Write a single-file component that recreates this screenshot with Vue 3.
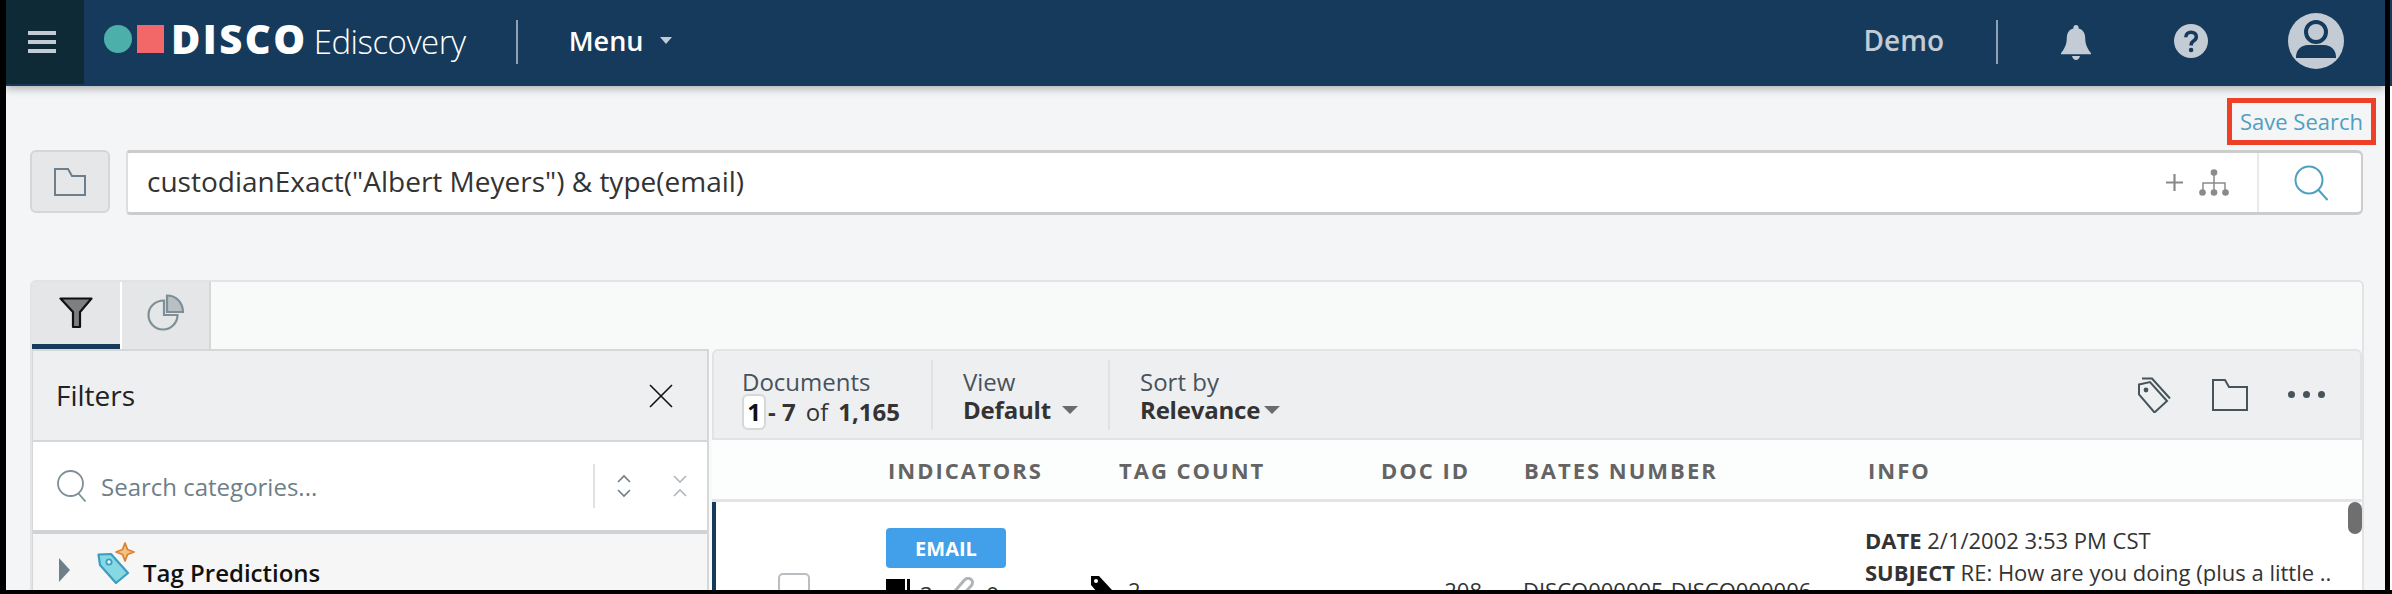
<script setup>
const columns = [
  { label: 'INDICATORS', cls: 'c-ind' },
  { label: 'TAG COUNT', cls: 'c-tag' },
  { label: 'DOC ID', cls: 'c-doc' },
  { label: 'BATES NUMBER', cls: 'c-bates' },
  { label: 'INFO', cls: 'c-info' }
]
</script>

<template>
  <div class="shot">
    <div class="page">
      <header class="topbar">
        <button class="burger" aria-label="Menu">
          <span></span><span></span><span></span>
        </button>
        <div class="logo">
          <i class="dot"></i><i class="sq"></i>
          <b class="disco">DISCO</b>
          <span class="edisc">Ediscovery</span>
        </div>
        <div class="vr vr-left"></div>
        <div class="menu">Menu</div>
        <i class="caret-light"></i>
        <div class="spacer"></div>
        <div class="demo">Demo</div>
        <div class="vr vr-right"></div>
        <svg class="bell" viewBox="0 0 30 35"><path fill="#c3cbd5" d="M15 0c1.6 0 2.6 1 2.6 2.6v.9c4.6 1.2 6.6 5 6.6 9.6 0 5.800 1.700 10 5.800 15.100v1H0v-1c4.100-5.100 5.800-9.300 5.800-15.100 0-4.600 2-8.400 6.600-9.600v-.9C12.400 1 13.400 0 15 0zM11 31h8c-.4 2.300-2 4-4 4s-3.600-1.700-4-4z"/></svg>
        <svg class="help" viewBox="0 0 34 34"><circle cx="17" cy="17" r="17" fill="#c3cbd5"/><path fill="none" stroke="#153a5b" stroke-width="3.600" d="M11.800 13.200c0-3 2.300-5 5.300-5s5.200 1.800 5.200 4.500c0 2.200-1.200 3.300-2.800 4.300-1.500 1-2.300 1.800-2.300 3.600v.8"/><circle cx="17.100" cy="26" r="2.300" fill="#153a5b"/></svg>
        <svg class="avatar" viewBox="0 0 56 56"><circle cx="28" cy="28" r="28" fill="#c3cbd5"/><circle cx="28" cy="19" r="10" fill="none" stroke="#153a5b" stroke-width="4"/><path fill="#153a5b" d="M8 44c0-7 5-12 12-12h16c7 0 12 5 12 12v1H8z"/></svg>
      </header>

      <main class="content">
        <div class="save-row"><a class="save">Save Search</a></div>

        <div class="search-row">
          <button class="folder-btn" aria-label="Folders">
            <svg width="32" height="28" viewBox="0 0 32 28"><path d="M1 1h13l4 7h13v19H1z" fill="none" stroke="#6d7f8b" stroke-width="2"/></svg>
          </button>
          <div class="query">
            <span class="query-text">custodianExact("Albert Meyers") &amp; type(email)</span>
            <div class="query-tools">
              <svg width="17" height="17" viewBox="0 0 17 17"><path d="M8.500 0v17M0 8.500h17" stroke="#8a8a8a" stroke-width="2.200"/></svg>
              <svg class="tree" width="30" height="27" viewBox="0 0 30 27"><path d="M15 3v20M4 23v-9h22v9" fill="none" stroke="#8a8a8a" stroke-width="1.500"/><circle cx="15" cy="3.500" r="3.300" fill="#8a8a8a"/><circle cx="3.500" cy="23.500" r="3.300" fill="#8a8a8a"/><circle cx="15" cy="23.500" r="3.300" fill="#8a8a8a"/><circle cx="26.500" cy="23.500" r="3.300" fill="#8a8a8a"/></svg>
            </div>
            <div class="query-go">
              <svg width="34" height="36" viewBox="0 0 34 36"><circle cx="15" cy="15" r="13.500" fill="none" stroke="#4f9fc0" stroke-width="2"/><path d="M24.500 25l9 10" stroke="#4f9fc0" stroke-width="2"/></svg>
            </div>
          </div>
        </div>

        <section class="panel">
          <div class="tabs">
            <div class="tab active">
              <svg width="34" height="32" viewBox="0 0 34 32"><path d="M1.500 1.500h31L21 15v15h-7V15z" fill="#7d7f81" stroke="#111" stroke-width="2.200" stroke-linejoin="round"/></svg>
            </div>
            <div class="tab">
              <svg width="38" height="37" viewBox="0 0 38 37"><path d="M17 6.500C8 6.500 1.500 13 1.500 21S8 35.500 16 35.500 30.500 29 30.500 21H17z" fill="none" stroke="#7e8f98" stroke-width="2.200"/><path d="M20 1.500c9 0 16 7 16 16.500H20z" fill="#b9bfc3" stroke="#7e8f98" stroke-width="2.200"/></svg>
            </div>
          </div>

          <div class="split">
            <aside class="filters">
              <div class="filters-head">
                <span class="filters-title">Filters</span>
                <svg width="24" height="24" viewBox="0 0 24 24"><path d="M1 1l22 22M23 1L1 23" stroke="#111" stroke-width="1.600"/></svg>
              </div>
              <div class="filters-search">
                <svg class="f-mag" width="30" height="32" viewBox="0 0 30 32"><circle cx="13.500" cy="13.500" r="12.500" fill="none" stroke="#7e8f98" stroke-width="1.800"/><path d="M21.500 23.500l7 8" stroke="#7e8f98" stroke-width="1.800"/></svg>
                <span class="f-placeholder">Search categories...</span>
                <div class="f-vr"></div>
                <svg class="f-expand" width="14" height="24" viewBox="0 0 14 24"><path d="M1 8l6-6 6 6M1 16l6 6 6-6" fill="none" stroke="#6f7f88" stroke-width="1.600"/></svg>
                <svg class="f-collapse" width="14" height="24" viewBox="0 0 14 24"><path d="M1 2l6 6 6-6M1 22l6-6 6 6" fill="none" stroke="#b0b8bd" stroke-width="1.600"/></svg>
              </div>
              <div class="filters-row">
                <i class="tri"></i>
                <svg class="tagpred" width="38" height="42" viewBox="0 0 38 42"><path d="M1.500 12.500l12.500-.5L31 31 19 41 3 23z" fill="#86d8e4" stroke="#3b9dbf" stroke-width="2.200" stroke-linejoin="round"/><circle cx="12" cy="20" r="2.600" fill="#fff" stroke="#3b9dbf" stroke-width="1.800"/><path d="M28 1l2.500 6.500L37 10l-6.500 2.500L28 19l-2.500-6.500L19 10l6.500-2.500z" fill="#f2c27d" stroke="#dc8335" stroke-width="1.800" stroke-linejoin="round"/></svg>
                <span class="f-label">Tag Predictions</span>
              </div>
            </aside>

            <div class="docs">
              <div class="toolbar">
                <div class="tb-group g-docs">
                  <div class="tb-label">Documents</div>
                  <div class="tb-pages"><span class="page-input">1</span><b class="dash">- 7</b><span class="of">of</span><b>1,165</b></div>
                </div>
                <div class="tb-group g-view">
                  <div class="tb-label">View</div>
                  <div class="tb-value"><b>Default</b><i class="caret gap-a"></i></div>
                </div>
                <div class="tb-group g-sort">
                  <div class="tb-label">Sort by</div>
                  <div class="tb-value"><b>Relevance</b><i class="caret gap-b"></i></div>
                </div>
                <div class="spacer"></div>
                <svg class="t-tags" width="34" height="36" viewBox="0 0 34 36"><path d="M2 7.500L13 5l17 19-12.500 11.500L2 17.500z" fill="none" stroke="#46545c" stroke-width="2"/><path d="M5 1.500h10l18 20" fill="none" stroke="#46545c" stroke-width="2"/><circle cx="9" cy="13" r="2.400" fill="#46545c"/></svg>
                <svg class="t-folder" width="36" height="32" viewBox="0 0 36 32"><path d="M1 1h12l4 7h18v23H1z" fill="none" stroke="#46545c" stroke-width="2"/></svg>
                <div class="t-dots"><i></i><i></i><i></i></div>
              </div>

              <div class="thead">
                <span v-for="c in columns" :key="c.label" :class="c.cls">{{ c.label }}</span>
              </div>

              <div class="row">
                <div class="check-col"><span class="check"></span></div>
                <div class="ind-col">
                  <span class="badge">EMAIL</span>
                  <div class="ind-line">
                    <i class="block"></i><i class="bar"></i><span class="n1">3</span>
                    <svg class="clip" width="22" height="26" viewBox="0 0 22 26"><path d="M5 24L19 9c2.500-3 1.500-6-.5-7S14 1 12 3.500L3 14c-2.500 3-1.500 6 .5 7.500" fill="none" stroke="#aeb5b9" stroke-width="3"/></svg>
                    <span class="n2">9</span>
                  </div>
                </div>
                <div class="tag-col">
                  <svg width="22" height="24" viewBox="0 0 22 24"><path d="M1 1h8l13 14-9 9L1 10z" fill="#000"/><circle cx="6" cy="6" r="2" fill="#fff"/></svg>
                  <span>2</span>
                </div>
                <div class="id-col">208</div>
                <div class="bates-col">DISCO000005-DISCO000006</div>
                <div class="info-col">
                  <div><b>DATE</b> 2/1/2002 3:53 PM CST</div>
                  <div><b>SUBJECT</b> RE: How are you doing (plus a little ..</div>
                </div>
                <i class="thumb"></i>
              </div>
            </div>
          </div>
        </section>
      </main>
    </div>
  </div>
</template>

<style>
html, body { margin: 0; padding: 0; background: #fff; overflow: hidden; }
</style>

<style scoped>
* { box-sizing: border-box; }
.shot {
  width: 2392px; height: 594px; overflow: hidden; padding-right: 2px;
  border-bottom: 4px solid #000;
  background: linear-gradient(#153a5b 86px, #fff 86px);
  font-family: "Open Sans", "Liberation Sans", sans-serif;
  color: #333;
}
.page {
  height: 590px; display: flex; flex-direction: column; overflow: hidden; background: #f4f5f7;
  border-left: 6px solid #000; border-right: 5px solid #000;
}
.spacer { flex: 1; }
i { display: block; }

.topbar {
  height: 86px; flex: none; display: flex; align-items: center; background: #153a5b;
  box-shadow: 0 3px 8px rgba(0,0,0,.28); position: relative; z-index: 1;
}
.burger {
  width: 78px; height: 84px; align-self: flex-start; background: #0f2a37; border: 0; padding: 0 0 0 22px;
  display: flex; flex-direction: column; justify-content: center; gap: 5px;
}
.burger span { display: block; width: 28px; height: 4px; background: #c3cbd5; }
.logo { display: flex; align-items: center; margin-left: 20px; height: 28px; margin-top: -8px; }
.dot { width: 28px; height: 28px; border-radius: 50%; background: #4dafa9; }
.sq { width: 27px; height: 28px; background: #f26767; margin-left: 5px; }
.disco { color: #fff; font-size: 40px; font-weight: 800; margin-left: 7px; letter-spacing: 2.500px; line-height: 28px; }
.edisc { color: #fff; font-size: 33px; font-weight: 300; margin-left: 6px; letter-spacing: -.5px; line-height: 28px; margin-top: 6px; }
.vr { width: 2px; height: 44px; background: #8fa1b3; }
.vr-left { margin-left: 50px; margin-top: -2px; }
.menu { color: #fff; font-size: 27px; font-weight: 600; margin-left: 51px; margin-top: -6px; }
.caret-light { border: 6px solid transparent; border-top: 7px solid #c3cbd5; border-bottom: 0; margin-left: 17px; margin-top: -5px; }
.demo { color: #c3cbd5; font-size: 28px; font-weight: 600; margin-top: -6px; }
.vr-right { margin-left: 52px; margin-top: -2px; }
.bell { width: 30px; height: 35px; margin-left: 63px; margin-top: -1px; }
.help { width: 34px; height: 34px; margin-left: 83px; margin-top: -4px; }
.avatar { width: 56px; height: 56px; margin-left: 80px; margin-right: 41px; margin-top: -4px; }

.content { flex: 1; min-height: 0; display: flex; flex-direction: column; }
.save-row { display: flex; justify-content: flex-end; margin-top: 12px; height: 47px; padding-right: 9px; }
.save {
  border: 5px solid #ee4026; width: 149px; height: 47px; color: #4f9fc0; font-size: 22px; padding-bottom: 2px;
  display: flex; align-items: center; justify-content: center; white-space: nowrap;
}
.search-row { display: flex; margin: 5px 22px 0 24px; gap: 16px; height: 65px; }
.folder-btn {
  width: 80px; height: 63px; flex: none; background: #e6e7e9; border: 2px solid #d5d6d8; border-radius: 6px;
  display: flex; align-items: center; justify-content: center; padding: 0;
}
.query {
  flex: 1; display: flex; align-items: center; background: #fff; padding-left: 19px;
  border-top: 3px solid #ccc; border-bottom: 3px solid #ccc; border-right: 2px solid #ccc; border-left: 2px solid #ddd;
  border-radius: 4px 6px 6px 4px;
}
.query-text { font-size: 28px; color: #333; white-space: nowrap; margin-top: -4px; }
.query-tools { margin-left: auto; display: flex; align-items: center; gap: 16px; margin-right: 28px; }
.query-go {
  width: 104px; align-self: stretch; border-left: 2px solid #e8e9ea; display: flex; align-items: center; justify-content: center;
  padding-left: 2px;
}

.panel {
  margin: 65px 21px 0 24px; flex: 1; min-height: 0; display: flex; flex-direction: column;
  background: #f8f9f9; border: 2px solid #e1e3e4; border-bottom: 0; border-radius: 6px 6px 0 0;
}
.tabs { display: flex; height: 67px; flex: none; }
.tab {
  width: 89px; background: #e5e6e8; display: flex; align-items: center; justify-content: center; padding-bottom: 6px;
  border-right: 2px solid #d5d7d8;
}
.tab.active { width: 90px; border-right: 2px solid #fff; box-shadow: inset 0 -5px 0 #153a5b; }
.split { flex: 1; min-height: 0; display: flex; gap: 3px; }
.filters { width: 677px; flex: none; display: flex; flex-direction: column; border: 2px solid #d5d7d8; border-left-width: 1px; border-bottom: 0; background: #f6f6f6; }
.filters-head {
  height: 91px; flex: none; background: #eeeff1; border-bottom: 2px solid #d5d7d8;
  display: flex; align-items: center; justify-content: space-between; padding: 0 34px 0 23px;
}
.filters-title { font-size: 28px; color: #222; margin-top: -2px; }
.filters-search {
  height: 92px; flex: none; background: #fff; border-bottom: 4px solid #cfd3d5;
  display: flex; align-items: center; padding-left: 24px;
}
.f-mag { flex: none; }
.f-placeholder { font-size: 24px; color: #6f7f88; margin-left: 14px; }
.f-vr { width: 2px; height: 44px; background: #dfe2e4; margin-left: auto; }
.f-expand { margin-left: 22px; }
.f-collapse { margin-left: 42px; margin-right: 20px; }
.filters-row { display: flex; align-items: flex-start; padding-top: 8px; height: 60px; }
.tri { border: 12px solid transparent; border-left: 11px solid #6f7f88; border-right: 0; margin: 16px 0 0 26px; }
.tagpred { margin-left: 27px; }
.f-label { font-size: 24px; font-weight: 600; color: #111; margin-left: 8px; margin-top: 14px; white-space: nowrap; }

.docs { flex: 1; min-width: 0; display: flex; flex-direction: column; position: relative; }
.toolbar {
  height: 91px; flex: none; display: flex; background: #eeeff1; border: 2px solid #e1e3e4; border-radius: 6px 6px 0 0;
  align-items: center; padding-left: 28px;
}
.tb-group { height: 70px; display: flex; flex-direction: column; padding-top: 7px; color: #333; }
.g-docs { width: 191px; border-right: 2px solid #e0e2e3; }
.g-view { width: 177px; padding-left: 30px; border-right: 2px solid #e0e2e3; }
.g-sort { padding-left: 30px; }
.tb-label { font-size: 24px; line-height: 30px; color: #47525a; }
.tb-pages { display: flex; align-items: center; font-size: 24px; line-height: 30px; height: 30px; }
.page-input {
  width: 24px; height: 36px; background: #fff; border: 2px solid #d5d7d8; border-radius: 6px; font-weight: 700;
  display: flex; align-items: center; justify-content: center; color: #111;
}
.dash { margin-left: 2px; }
.of { font-weight: 400; margin: 0 10px 0 10px; }
.tb-value { display: flex; align-items: center; font-size: 24px; line-height: 26px; }
.tb-value b { letter-spacing: -.2px; }
.caret { border: 8px solid transparent; border-top: 8px solid #6b6b6b; border-bottom: 0; }
.gap-a { margin-left: 11px; }
.gap-b { margin-left: 4px; }
.t-tags { margin-right: 41px; }
.t-folder { margin-right: 40px; }
.t-dots { display: flex; gap: 8px; margin-right: 35px; }
.t-dots i { width: 7px; height: 7px; border-radius: 50%; background: #46545c; }

.thead {
  height: 62px; flex: none; background: #fcfdfd; border-bottom: 3px solid #e2e4e5; position: relative;
  display: grid; grid-template-columns: 176px 231px 262px 143px 344px 1fr; align-items: center;
  font-size: 22px; font-weight: 700; letter-spacing: 2px; color: #646464;
}
.c-ind { grid-column: 2; }
.c-tag { grid-column: 3; }
.c-doc { grid-column: 4; }
.c-bates { grid-column: 5; }
.c-info { grid-column: 6; }
.row {
  flex: 1; min-height: 0; background: #fff; border-left: 4px solid #153a5b; display: flex; position: relative; overflow: hidden;
  font-size: 22px; color: #333;
}
.check-col { width: 170px; flex: none; padding: 71px 0 0 62px; }
.check { display: block; width: 32px; height: 32px; border: 2px solid #b8bec2; border-radius: 5px; }
.ind-col { width: 204px; flex: none; padding-top: 26px; }
.badge {
  display: flex; width: 120px; height: 40px; background: #42a0ea; border-radius: 4px; color: #fff; font-weight: 700; font-size: 20px;
  align-items: center; justify-content: center;
}
.ind-line { display: flex; align-items: flex-start; margin-top: 11px; height: 30px; }
.block { width: 19px; height: 30px; background: #000; }
.bar { width: 3px; height: 30px; background: #000; margin-left: 2px; }
.n1 { margin-left: 10px; line-height: 30px; color: #333; }
.clip { margin-left: 19px; margin-top: -2px; }
.n2 { margin-left: 13px; line-height: 30px; }
.tag-col { width: 250px; flex: none; padding-top: 73px; display: flex; align-items: flex-start; gap: 16px; }
.tag-col span { line-height: 30px; }
.id-col { width: 142px; flex: none; padding-top: 73px; text-align: right; line-height: 30px; }
.bates-col { width: 342px; margin-left: 41px; flex: none; padding-top: 73px; line-height: 30px; white-space: nowrap; }
.info-col { flex: 1; padding-top: 22px; line-height: 32px; white-space: nowrap; font-size: 22px; }
.thumb { position: absolute; right: 0; top: 0; width: 14px; height: 32px; background: #6f6f6f; border-radius: 7px; }
</style>
